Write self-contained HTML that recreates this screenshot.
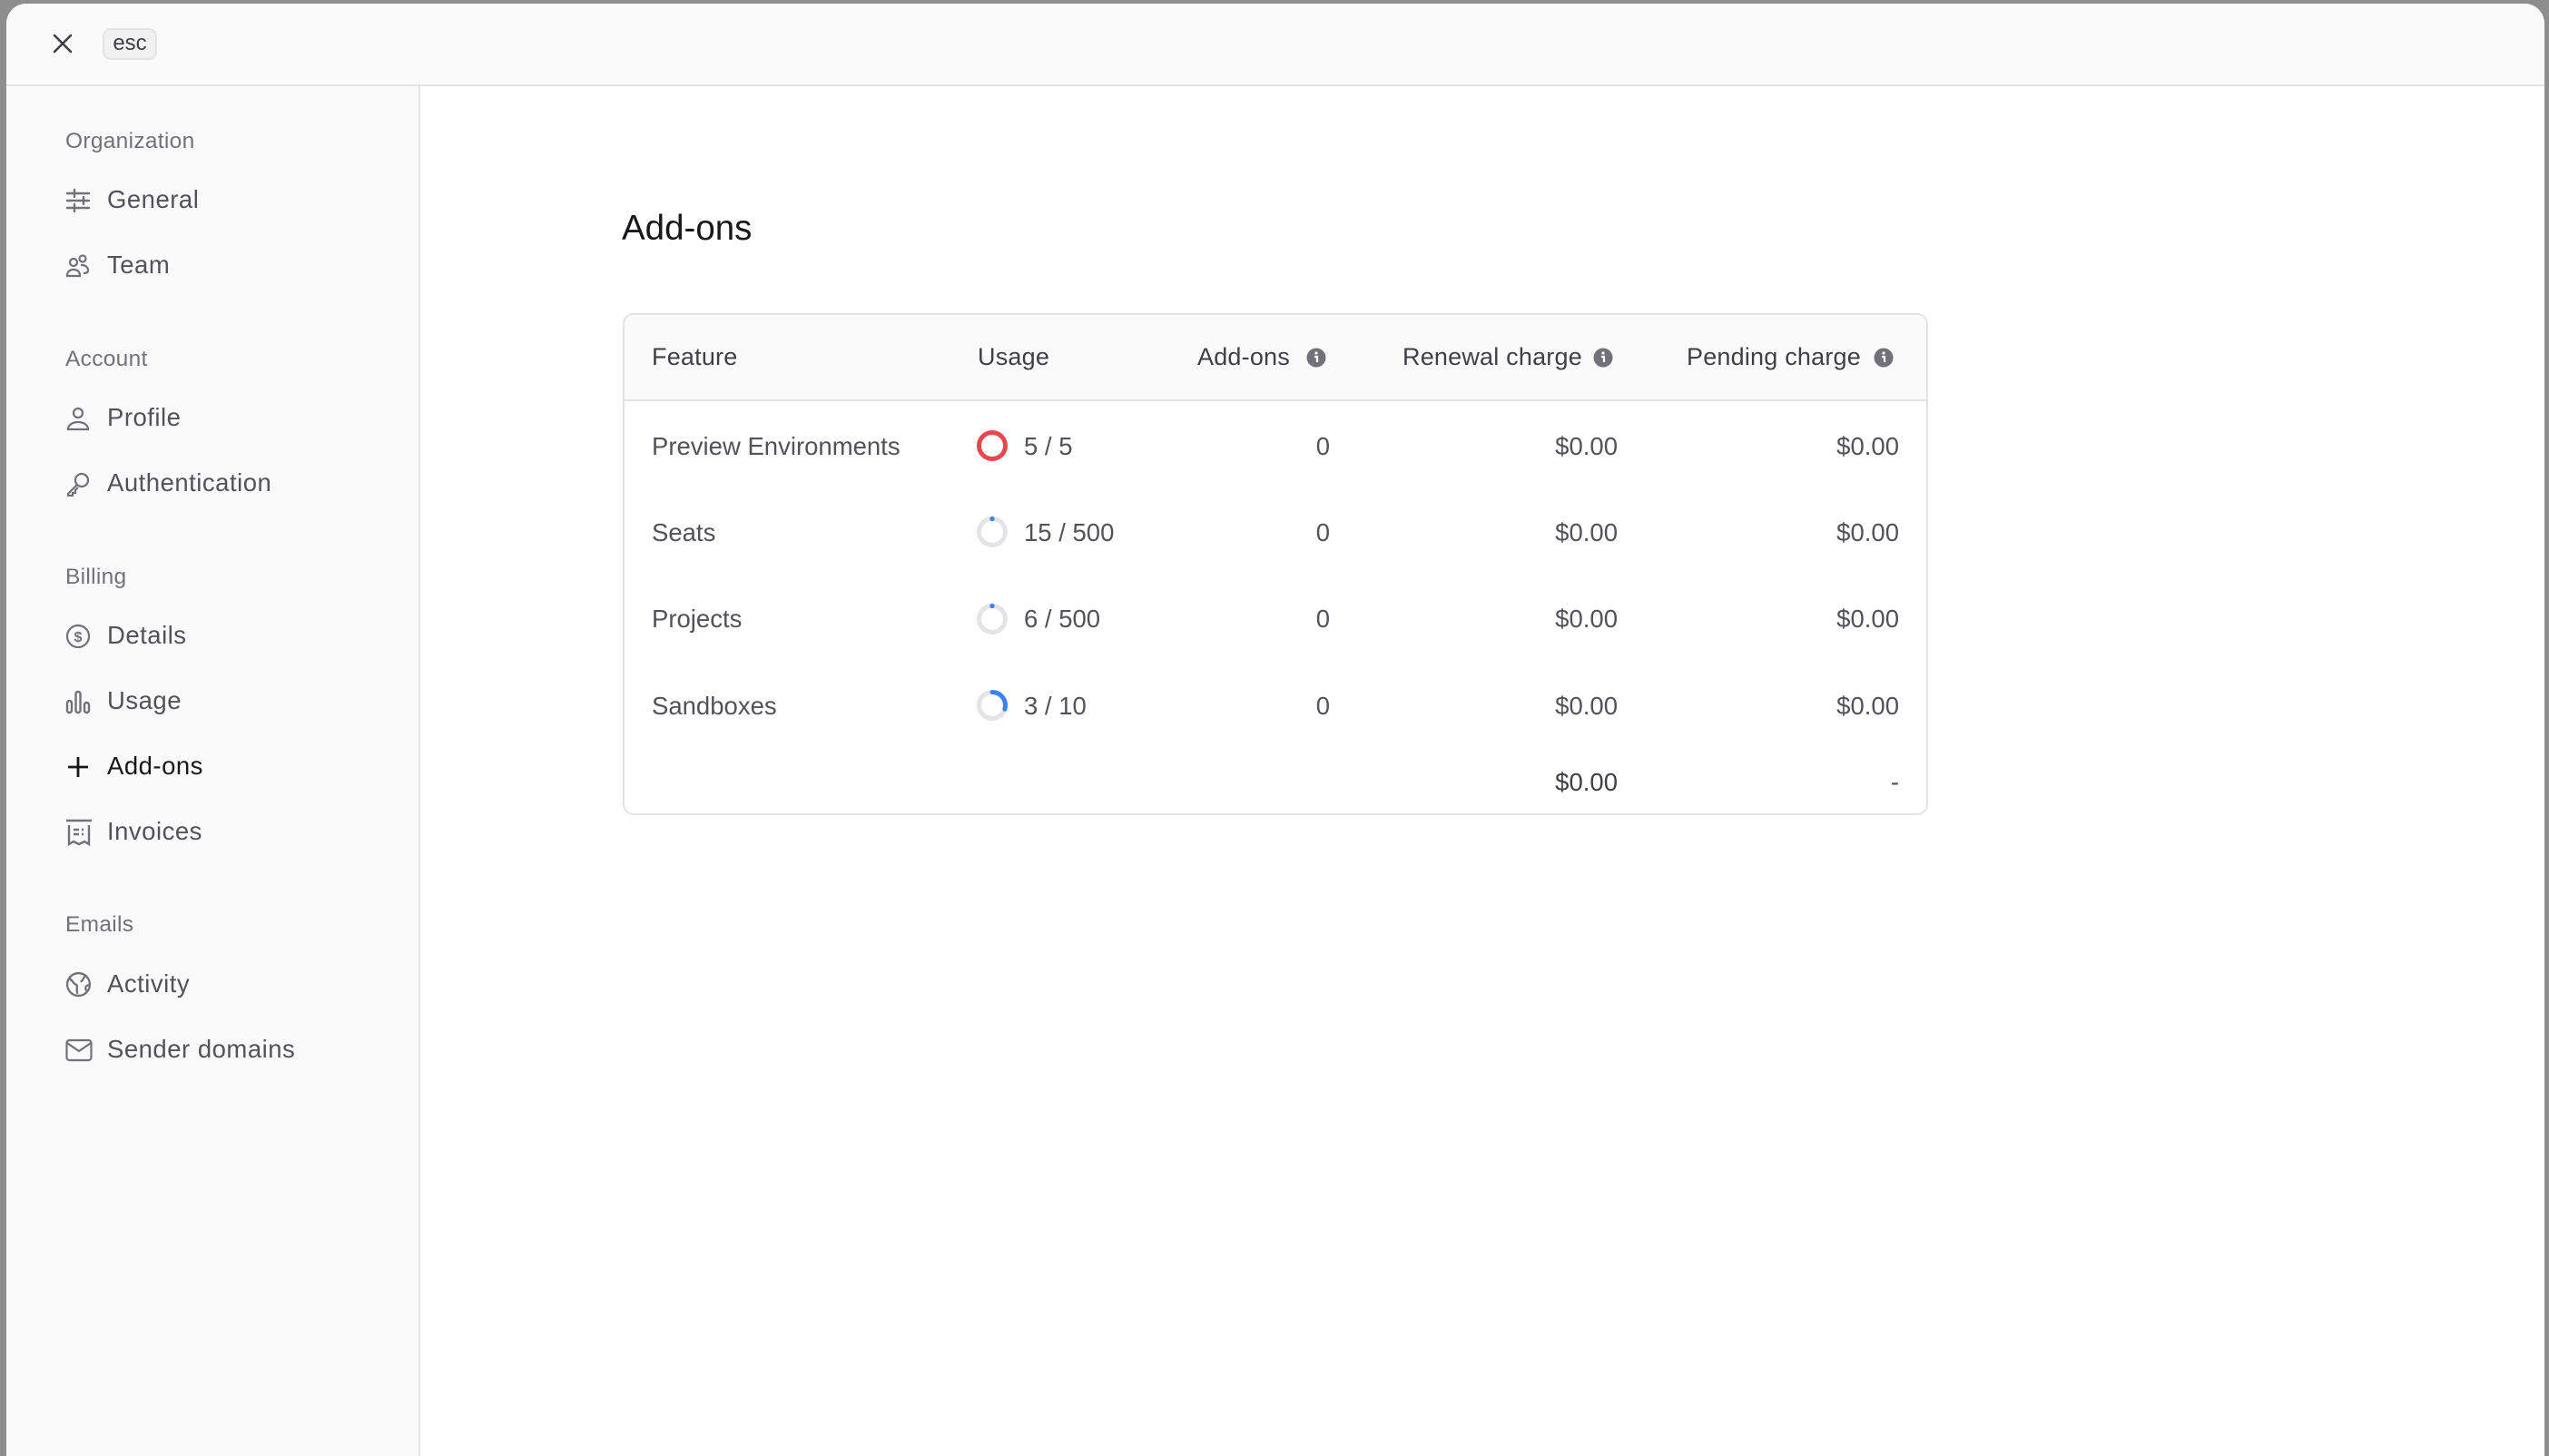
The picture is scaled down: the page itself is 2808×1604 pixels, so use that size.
<!DOCTYPE html>
<html><head><meta charset="utf-8"><style>
*{margin:0;padding:0;box-sizing:border-box}
body{width:2808px;height:1580px;background:#8e8e8e;font-family:"Liberation Sans",sans-serif;position:relative;overflow:hidden}
.win{position:absolute;left:7px;top:4px;width:2796px;height:1600px;background:#fff;border-radius:22px 22px 0 0;overflow:hidden}
.hdr{position:absolute;left:0;top:0;right:0;height:91px;background:#fafafa;border-bottom:2px solid #e4e4e7}
.side{position:absolute;left:0;top:91px;width:456px;bottom:0;background:#fafafa;border-right:2px solid #e4e4e7}
.a{position:absolute;white-space:nowrap}
.lab{color:#71717a;font-size:24.5px;letter-spacing:0.3px}
.it{color:#52525b;font-size:27.5px;letter-spacing:0.5px}
.ic{position:absolute}
.th{color:#3f3f46;font-size:27px;letter-spacing:0.2px}
.td{color:#52525b;font-size:27.5px}
.r{text-align:right}
</style></head><body>
<div class="win">
<div class="hdr"></div>
<svg class="ic" style="left:50px;top:32px" width="24" height="24" viewBox="0 0 24 24"><path d="M3 3L21 21M21 3L3 21" stroke="#3f3f46" stroke-width="2.6" stroke-linecap="round"/></svg>
<div class="a" style="left:106px;top:27px;width:60px;height:35px;border:2px solid #e4e4e7;border-radius:9px;background:#f1f1f2;color:#3f3f46;font-size:24px;text-align:center;line-height:30px">esc</div>
<div class="side"></div>
</div>
<div id="c" style="position:absolute;left:0;top:2px">
<div class="a lab" style="left:72px;top:140px">Organization</div>
<div class="a lab" style="left:72px;top:380px">Account</div>
<div class="a lab" style="left:72px;top:620px">Billing</div>
<div class="a lab" style="left:72px;top:1003px">Emails</div>
<div class="a it" style="left:118px;top:202px">General</div>
<div class="a it" style="left:118px;top:274px">Team</div>
<div class="a it" style="left:118px;top:442px">Profile</div>
<div class="a it" style="left:118px;top:514px">Authentication</div>
<div class="a it" style="left:118px;top:682px">Details</div>
<div class="a it" style="left:118px;top:754px">Usage</div>
<div class="a it" style="left:118px;top:826px;color:#18181b">Add-ons</div>
<div class="a it" style="left:118px;top:898px">Invoices</div>
<div class="a it" style="left:118px;top:1066px">Activity</div>
<div class="a it" style="left:118px;top:1138px">Sender domains</div>
<svg class="ic" style="left:72px;top:205px" width="28" height="28" viewBox="0 0 28 28" fill="none" stroke="#71717a" stroke-width="2.4" stroke-linecap="round"><path d="M2 6H26M2 14H26M2 22H26M10 2V10M20 10V18M10 18V26"/></svg>
<svg class="ic" style="left:72px;top:277px" width="28" height="28" viewBox="0 0 28 28" fill="none" stroke="#71717a" stroke-width="2.2"><circle cx="9" cy="10" r="4"/><circle cx="19" cy="6" r="3.5"/><path d="M2 25c0-5 3-7 7-7s7 2 7 7zM17 13c5 0 8 2 8 6 0 2-2 3-5 3"/></svg>
<svg class="ic" style="left:72px;top:445px" width="28" height="28" viewBox="0 0 28 28" fill="none" stroke="#71717a" stroke-width="2.2"><circle cx="14" cy="8" r="5"/><path d="M3 26c0-5 5-8 11-8s11 3 11 8z"/></svg>
<svg class="ic" style="left:72px;top:517px" width="28" height="28" viewBox="0 0 28 28" fill="none" stroke="#71717a" stroke-width="2.2"><circle cx="18" cy="10" r="7"/><path d="M13 15L3 25V27H8V24H11V21L14 18"/></svg>
<svg class="ic" style="left:72px;top:685px" width="28" height="28" viewBox="0 0 28 28" fill="none" stroke="#71717a" stroke-width="2.2"><circle cx="14" cy="14" r="12"/><text x="14" y="20" font-size="16" font-family="Liberation Sans" font-weight="bold" fill="#71717a" stroke="none" text-anchor="middle">$</text></svg>
<svg class="ic" style="left:72px;top:757px" width="28" height="28" viewBox="0 0 28 28" fill="none" stroke="#71717a" stroke-width="2.4"><rect x="2" y="13" width="5" height="13" rx="2.5"/><rect x="11.5" y="3" width="5" height="23" rx="2.5"/><rect x="21" y="15" width="5" height="11" rx="2.5"/></svg>
<svg class="ic" style="left:72px;top:829px" width="28" height="28" viewBox="0 0 28 28" fill="none" stroke="#18181b" stroke-width="2.8"><path d="M14 3V25M3 14H25"/></svg>
<svg class="ic" style="left:72px;top:900px" width="30" height="30" viewBox="0 0 30 30" fill="none" stroke="#71717a" stroke-width="2.4"><path d="M1 2H29M4 7V28L9 25L15 28L21 25L26 28V7M9 12H15M18 12H20M9 17H15M18 17H20"/></svg>
<svg class="ic" style="left:72px;top:1068px" width="29" height="29" viewBox="0 0 28 28" fill="none" stroke="#71717a" stroke-width="2.2"><circle cx="14" cy="14" r="12"/><path d="M4 8C8 9 8 13 11 14S11 20 13 24M22 5C18 6 20 10 16 11M26 15C22 14 20 18 23 21"/></svg>
<svg class="ic" style="left:72px;top:1142px" width="30" height="26" viewBox="0 0 30 26" fill="none" stroke="#71717a" stroke-width="2.2"><rect x="1.5" y="2" width="27" height="22" rx="3"/><path d="M2 5L15 14L28 5"/></svg>

<div class="a" style="left:685px;top:228px;font-size:38.5px;color:#18181b">Add-ons</div>
<div class="a" style="left:686px;top:343px;width:1438px;height:553px;border:2px solid #e4e4e7;border-radius:12px;overflow:hidden;background:#fff">
 <div style="position:absolute;left:0;top:0;right:0;height:95px;background:#fafafa;border-bottom:2px solid #e4e4e7"></div>
</div>
<div class="a th" style="left:718px;top:376px">Feature</div>
<div class="a th" style="left:1077px;top:376px">Usage</div>
<div class="a th" style="left:1319px;top:376px">Add-ons</div>
<div class="a th" style="left:1545px;top:376px">Renewal charge</div>
<div class="a th" style="left:1858px;top:376px">Pending charge</div>
<svg class="ic" style="left:1439px;top:381px" width="22" height="22" viewBox="0 0 22 22"><circle cx="11" cy="11" r="10.5" fill="#71717a"/><circle cx="11" cy="6" r="1.6" fill="#fff"/><path d="M9 10H12V16" stroke="#fff" stroke-width="2.2" fill="none"/></svg>
<svg class="ic" style="left:1755px;top:381px" width="22" height="22" viewBox="0 0 22 22"><circle cx="11" cy="11" r="10.5" fill="#71717a"/><circle cx="11" cy="6" r="1.6" fill="#fff"/><path d="M9 10H12V16" stroke="#fff" stroke-width="2.2" fill="none"/></svg>
<svg class="ic" style="left:2064px;top:381px" width="22" height="22" viewBox="0 0 22 22"><circle cx="11" cy="11" r="10.5" fill="#71717a"/><circle cx="11" cy="6" r="1.6" fill="#fff"/><path d="M9 10H12V16" stroke="#fff" stroke-width="2.2" fill="none"/></svg>

<div class="a td" style="left:718px;top:474px">Preview Environments</div>
<div class="a td" style="left:718px;top:569px">Seats</div>
<div class="a td" style="left:718px;top:664px">Projects</div>
<div class="a td" style="left:718px;top:760px">Sandboxes</div>

<svg class="ic" style="left:1075px;top:471px" width="36" height="36" viewBox="0 0 36 36"><circle cx="18" cy="18" r="14.5" fill="none" stroke="#e5484d" stroke-width="5"/></svg>
<svg class="ic" style="left:1075px;top:566px" width="36" height="36" viewBox="0 0 36 36"><circle cx="18" cy="18" r="14.5" fill="none" stroke="#e4e4e7" stroke-width="5"/><circle cx="18" cy="3.5" r="2.6" fill="#3b82f6"/></svg>
<svg class="ic" style="left:1075px;top:662px" width="36" height="36" viewBox="0 0 36 36"><circle cx="18" cy="18" r="14.5" fill="none" stroke="#e4e4e7" stroke-width="5"/><circle cx="18" cy="3.5" r="2.6" fill="#3b82f6"/></svg>
<svg class="ic" style="left:1075px;top:757px" width="36" height="36" viewBox="0 0 36 36"><circle cx="18" cy="18" r="14.5" fill="none" stroke="#e4e4e7" stroke-width="5"/><circle cx="18" cy="18" r="14.5" fill="none" stroke="#3b82f6" stroke-width="5" stroke-dasharray="27 100" transform="rotate(-90 18 18)" stroke-linecap="round"/></svg>

<div class="a td" style="left:1128px;top:474px">5 / 5</div>
<div class="a td" style="left:1128px;top:569px">15 / 500</div>
<div class="a td" style="left:1128px;top:664px">6 / 500</div>
<div class="a td" style="left:1128px;top:760px">3 / 10</div>

<div class="a td r" style="left:1365px;width:100px;top:474px">0</div>
<div class="a td r" style="left:1365px;width:100px;top:569px">0</div>
<div class="a td r" style="left:1365px;width:100px;top:664px">0</div>
<div class="a td r" style="left:1365px;width:100px;top:760px">0</div>

<div class="a td r" style="left:1600px;width:182px;top:474px">$0.00</div>
<div class="a td r" style="left:1600px;width:182px;top:569px">$0.00</div>
<div class="a td r" style="left:1600px;width:182px;top:664px">$0.00</div>
<div class="a td r" style="left:1600px;width:182px;top:760px">$0.00</div>
<div class="a td r" style="left:1600px;width:182px;top:844px;color:#3f3f46">$0.00</div>

<div class="a td r" style="left:1910px;width:182px;top:474px">$0.00</div>
<div class="a td r" style="left:1910px;width:182px;top:569px">$0.00</div>
<div class="a td r" style="left:1910px;width:182px;top:664px">$0.00</div>
<div class="a td r" style="left:1910px;width:182px;top:760px">$0.00</div>
<div class="a td r" style="left:1910px;width:182px;top:844px">-</div>
</div>
</body></html>
